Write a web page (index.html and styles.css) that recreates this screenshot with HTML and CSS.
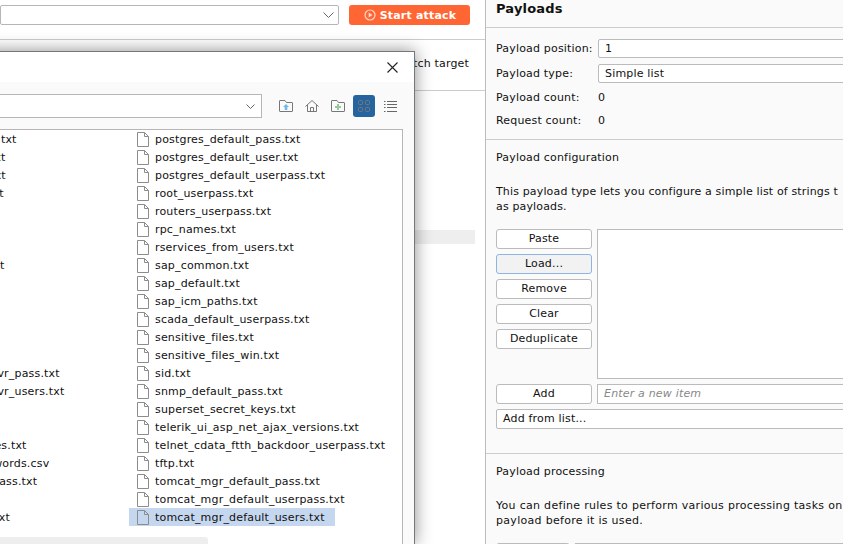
FILE: index.html
```html
<!DOCTYPE html>
<html>
<head>
<meta charset="utf-8">
<title>Intruder</title>
<link rel="stylesheet" href="styles.css">
</head>
<body>
<svg class="defs" width="0" height="0">
  <symbol id="file" viewBox="0 0 12 15">
    <path d="M.5.5h7l4 4v10H.5zM7.5.5v4h4" fill="none" stroke="#8c8c8c"/>
  </symbol>
</svg>

<div class="left">
  <div class="attackbar">
    <div class="combo attackcombo">
      <svg class="chev" width="11" height="6" viewBox="0 0 11 6"><path d="M.5.5l5 5 5-5" fill="none" stroke="#666"/></svg>
    </div>
    <div class="startbtn">
      <svg width="12" height="12" viewBox="0 0 12 12"><circle cx="6" cy="6" r="5" fill="none" stroke="#ffd9cc" stroke-width="1.2"/><path d="M4.7 3.6v4.8L8.4 6z" fill="#ffd9cc"/></svg>
      Start attack
    </div>
  </div>
  <div class="hostrow">Update Host header to match target</div>
  <div class="editor">
    <div class="editline"></div>
  </div>
</div>

<div class="right">
  <h2 class="paneltitle">Payloads</h2>
  <div class="section settings">
    <div class="setrow"><span class="setlabel">Payload position:</span><div class="field">1</div></div>
    <div class="setrow"><span class="setlabel">Payload type:</span><div class="field">Simple list</div></div>
    <div class="setrow plain counta"><span class="setlabel">Payload count:</span><span>0</span></div>
    <div class="setrow plain countb"><span class="setlabel">Request count:</span><span>0</span></div>
  </div>
  <div class="section config">
    <div class="sectitle">Payload configuration</div>
    <p class="desc configdesc">This payload type lets you configure a simple list of strings t<br>as payloads.</p>
    <div class="listarea">
      <div class="btncol">
        <div class="btn">Paste</div>
        <div class="btn focused">Load...</div>
        <div class="btn">Remove</div>
        <div class="btn">Clear</div>
        <div class="btn">Deduplicate</div>
      </div>
      <div class="listbox"></div>
    </div>
    <div class="addrow">
      <div class="btn">Add</div>
      <div class="newitem">Enter a new item</div>
    </div>
    <div class="addfrom">Add from list...</div>
  </div>
  <div class="section processing">
    <div class="sectitle">Payload processing</div>
    <p class="desc">You can define rules to perform various processing tasks on<br>payload before it is used.</p>
    <div class="rulerow">
      <div class="btn rulebtn"></div>
      <div class="ruletable"></div>
    </div>
  </div>
</div>

<div class="dialog">
  <div class="dlgtitle">
    <svg width="11" height="11" viewBox="0 0 11 11"><path d="M.5.5l10 10M10.5.5l-10 10" stroke="#222" stroke-width="1.1"/></svg>
  </div>
  <div class="dlgbody">
    <div class="dlgtools">
      <div class="combo dircombo">
        <svg class="chev" width="9" height="5" viewBox="0 0 9 5"><path d="M.5.5l4 4 4-4" fill="none" stroke="#666"/></svg>
      </div>
      <div class="toolicons">
        <svg width="14" height="12" viewBox="0 0 14 12"><path d="M1 11.500h12a.5.5 0 0 0 .5-.5V3a.5.5 0 0 0-.5-.5H7.500L6 .5H1a.5.5 0 0 0-.5.5v10a.5.5 0 0 0 .5.5z" fill="none" stroke="#777"/><path d="M7 4l3 3H8.300v3H5.700V7H4z" fill="#6db9ea"/></svg>
        <svg width="14" height="12" viewBox="0 0 14 12"><path d="M.5 6.500L7 .5l6.500 6M2.500 5v6.500h9V5M5.500 11.500v-4h3v4" fill="none" stroke="#777"/></svg>
        <svg width="14" height="12" viewBox="0 0 14 12"><path d="M1 11.500h12a.5.5 0 0 0 .5-.5V3a.5.5 0 0 0-.5-.5H7.500L6 .5H1a.5.5 0 0 0-.5.5v10a.5.5 0 0 0 .5.5z" fill="none" stroke="#777"/><path d="M6 4h2v2h2v2H8v2H6V8H4V6h2z" fill="#93cb9c"/></svg>
        <div class="gridbtn">
          <svg width="12" height="12" viewBox="0 0 12 12"><g fill="none" stroke="#777"><rect x=".5" y=".5" width="4" height="4" rx="1"/><rect x="7.500" y=".5" width="4" height="4" rx="1"/><rect x=".5" y="7.500" width="4" height="4" rx="1"/><rect x="7.500" y="7.500" width="4" height="4" rx="1"/></g></svg>
        </div>
        <svg class="listicon" width="13" height="11" viewBox="0 0 13 11"><path d="M3 .5h10M3 3.500h10M3 6.500h10M3 10.500h10M0 .5h1.500M0 3.500h1.500M0 6.500h1.500M0 10.500h1.500" stroke="#666"/></svg>
      </div>
    </div>
    <div class="filelist">
      <div class="filecol first">
        <div class="file"><svg width="12" height="15"><use href="#file"/></svg>hp_default_userpass.txt</div>
        <div class="file"><svg width="12" height="15"><use href="#file"/></svg>http_default_users.txt</div>
        <div class="file"><svg width="12" height="15"><use href="#file"/></svg>idrac_default_pass.txt</div>
        <div class="file"><svg width="12" height="15"><use href="#file"/></svg>idrac_default_user.txt</div>
        <div class="file"><svg width="12" height="15"><use href="#file"/></svg>ipmi_passwords.txt</div>
        <div class="file"><svg width="12" height="15"><use href="#file"/></svg>ipmi_users.txt</div>
        <div class="file"><svg width="12" height="15"><use href="#file"/></svg>joomla.txt</div>
        <div class="file"><svg width="12" height="15"><use href="#file"/></svg>keyboard-patterns.txt</div>
        <div class="file"><svg width="12" height="15"><use href="#file"/></svg>lync_subdomains.txt</div>
        <div class="file"><svg width="12" height="15"><use href="#file"/></svg>malicious_urls.txt</div>
        <div class="file"><svg width="12" height="15"><use href="#file"/></svg>mirai_pass.txt</div>
        <div class="file"><svg width="12" height="15"><use href="#file"/></svg>mirai_user.txt</div>
        <div class="file"><svg width="12" height="15"><use href="#file"/></svg>mirai_user_pass.txt</div>
        <div class="file"><svg width="12" height="15"><use href="#file"/></svg>multi_vendor_cctv_dvr_pass.txt</div>
        <div class="file"><svg width="12" height="15"><use href="#file"/></svg>multi_vendor_cctv_dvr_users.txt</div>
        <div class="file"><svg width="12" height="15"><use href="#file"/></svg>named_pipes.txt</div>
        <div class="file"><svg width="12" height="15"><use href="#file"/></svg>namelist.txt</div>
        <div class="file"><svg width="12" height="15"><use href="#file"/></svg>oracle_default_hashes.txt</div>
        <div class="file"><svg width="12" height="15"><use href="#file"/></svg>oracle_default_passwords.csv</div>
        <div class="file"><svg width="12" height="15"><use href="#file"/></svg>oracle_default_userpass.txt</div>
        <div class="file"><svg width="12" height="15"><use href="#file"/></svg>password.lst</div>
        <div class="file"><svg width="12" height="15"><use href="#file"/></svg>piata_ssh_userpass.txt</div>
      </div>
      <div class="filecol">
        <div class="file"><svg width="12" height="15"><use href="#file"/></svg>postgres_default_pass.txt</div>
        <div class="file"><svg width="12" height="15"><use href="#file"/></svg>postgres_default_user.txt</div>
        <div class="file"><svg width="12" height="15"><use href="#file"/></svg>postgres_default_userpass.txt</div>
        <div class="file"><svg width="12" height="15"><use href="#file"/></svg>root_userpass.txt</div>
        <div class="file"><svg width="12" height="15"><use href="#file"/></svg>routers_userpass.txt</div>
        <div class="file"><svg width="12" height="15"><use href="#file"/></svg>rpc_names.txt</div>
        <div class="file"><svg width="12" height="15"><use href="#file"/></svg>rservices_from_users.txt</div>
        <div class="file"><svg width="12" height="15"><use href="#file"/></svg>sap_common.txt</div>
        <div class="file"><svg width="12" height="15"><use href="#file"/></svg>sap_default.txt</div>
        <div class="file"><svg width="12" height="15"><use href="#file"/></svg>sap_icm_paths.txt</div>
        <div class="file"><svg width="12" height="15"><use href="#file"/></svg>scada_default_userpass.txt</div>
        <div class="file"><svg width="12" height="15"><use href="#file"/></svg>sensitive_files.txt</div>
        <div class="file"><svg width="12" height="15"><use href="#file"/></svg>sensitive_files_win.txt</div>
        <div class="file"><svg width="12" height="15"><use href="#file"/></svg>sid.txt</div>
        <div class="file"><svg width="12" height="15"><use href="#file"/></svg>snmp_default_pass.txt</div>
        <div class="file"><svg width="12" height="15"><use href="#file"/></svg>superset_secret_keys.txt</div>
        <div class="file"><svg width="12" height="15"><use href="#file"/></svg>telerik_ui_asp_net_ajax_versions.txt</div>
        <div class="file"><svg width="12" height="15"><use href="#file"/></svg>telnet_cdata_ftth_backdoor_userpass.txt</div>
        <div class="file"><svg width="12" height="15"><use href="#file"/></svg>tftp.txt</div>
        <div class="file"><svg width="12" height="15"><use href="#file"/></svg>tomcat_mgr_default_pass.txt</div>
        <div class="file"><svg width="12" height="15"><use href="#file"/></svg>tomcat_mgr_default_userpass.txt</div>
        <div class="file selected"><svg width="12" height="15"><use href="#file"/></svg>tomcat_mgr_default_users.txt</div>
      </div>
    </div>
    <div class="hscroll"></div>
  </div>
</div>
</body>
</html>
```

FILE: styles.css
```css
html, body {
  margin: 0;
  height: 544px;
  overflow: hidden;
}
body {
  position: relative;
  display: flex;
  background-color: #fff;
  font-family: "DejaVu Sans", sans-serif;
  font-size: 11px;
  letter-spacing: .18px;
  color: #111;
}
.defs {
  position: absolute;
}

/* left side, behind the file dialog */
.left {
  width: 485px;
  flex: none;
}
.attackbar {
  height: 40px;
  box-sizing: border-box;
  padding: 5px 15px 0 0;
  display: flex;
  gap: 10px;
  border-bottom: 1px solid #ccc;
}
.combo {
  box-sizing: border-box;
  height: 20px;
  background-color: #fff;
  border: 1px solid #b9b5b5;
  border-radius: 2px;
  display: flex;
  align-items: center;
  justify-content: flex-end;
  padding-right: 4px;
}
.attackcombo {
  width: 339px;
}
.startbtn {
  width: 121px;
  height: 20px;
  box-sizing: border-box;
  padding-left: 1px;
  background-color: #ff6633;
  border-radius: 3px;
  color: #fff;
  font-weight: bold;
  letter-spacing: .2px;
  display: flex;
  align-items: center;
  justify-content: center;
  gap: 4px;
}
.hostrow {
  height: 51px;
  box-sizing: border-box;
  padding: 17px 16px 0 0;
  text-align: right;
  border-bottom: 1px solid #ccc;
}
.editor {
  padding: 139px 10px 0 0;
}
.editline {
  height: 14px;
  background-color: #eee;
}

/* right side */
.right {
  flex: none;
  width: 600px;
  box-sizing: border-box;
  background-color: #fafafa;
  border-left: 1px solid #bbb;
}
.paneltitle {
  margin: 0;
  height: 28px;
  box-sizing: border-box;
  padding: 1px 10px 0;
  font-size: 13px;
  line-height: 16px;
  border-bottom: 1px solid #ccc;
}
.section {
  padding: 0 10px;
  border-bottom: 1px solid #ccc;
}
.settings {
  height: 112px;
  box-sizing: border-box;
  padding-top: 11px;
}
.setrow {
  display: flex;
  align-items: center;
  height: 19px;
  margin-bottom: 6px;
}
.setrow.plain {
  height: 14px;
}
.counta {
  margin-top: 7px;
  margin-bottom: 9px;
}
.setlabel {
  width: 102px;
  flex: none;
}
.field {
  flex: 1;
  box-sizing: border-box;
  height: 19px;
  line-height: 17px;
  padding-left: 6px;
  background-color: #fff;
  border: 1px solid #bbb;
  border-radius: 2px;
}
.config {
  height: 314px;
  box-sizing: border-box;
  padding-top: 11px;
}
.sectitle {
  line-height: 14px;
}
.desc {
  margin: 19px 0 0;
  line-height: 15px;
  letter-spacing: .3px;
}
.configdesc {
  letter-spacing: .15px;
}
.listarea {
  display: flex;
  gap: 5px;
  margin-top: 15px;
}
.btncol {
  display: flex;
  flex-direction: column;
  gap: 5px;
  height: 150px;
}
.btn {
  box-sizing: border-box;
  width: 96px;
  height: 20px;
  line-height: 18px;
  text-align: center;
  background-color: #fff;
  border: 1px solid #bbb;
  border-radius: 3px;
}
.btn.focused {
  background-color: #f2f2f2;
  border-color: #8db4e2;
}
.listbox {
  flex: 1;
  box-sizing: border-box;
  height: 150px;
  background-color: #fff;
  border: 1px solid #bbb;
}
.addrow {
  display: flex;
  gap: 5px;
  margin-top: 5px;
}
.newitem {
  flex: 1;
  box-sizing: border-box;
  height: 20px;
  line-height: 18px;
  padding-left: 6px;
  background-color: #fff;
  border: 1px solid #bbb;
  color: #888;
  font-style: italic;
}
.addfrom {
  box-sizing: border-box;
  height: 20px;
  line-height: 18px;
  margin-top: 5px;
  padding-left: 6px;
  background-color: #fff;
  border: 1px solid #bbb;
  border-radius: 2px;
}
.processing {
  padding-top: 11px;
  border-bottom: none;
}
.rulerow {
  display: flex;
  gap: 5px;
  margin-top: 15px;
}
.rulebtn {
  width: 74px;
}
.ruletable {
  flex: 1;
  height: 20px;
  border: 1px solid #bbb;
}

/* load file dialog, its left part is off the screen */
.dialog {
  position: absolute;
  left: -200px;
  top: 51px;
  width: 615px;
  height: 493px;
  box-sizing: border-box;
  border: 1px solid #777;
  border-bottom: none;
  background-color: #fff;
  box-shadow: 0 0 16px rgba(0, 0, 0, .45);
}
.dlgtitle {
  height: 30px;
  display: flex;
  justify-content: flex-end;
  align-items: flex-start;
  padding: 10px 16px 0 0;
  box-sizing: border-box;
}
.dlgbody {
  position: relative;
  height: 462px;
  background-color: #fafafa;
}
.dlgtools {
  height: 47px;
  box-sizing: border-box;
  padding-top: 12px;
  display: flex;
}
.dircombo {
  width: 461px;
  height: 24px;
  border-radius: 0;
  padding-right: 6px;
}
.toolicons {
  display: flex;
  align-items: center;
  gap: 12px;
  height: 24px;
  margin-left: 17px;
}
.gridbtn {
  width: 22px;
  height: 22px;
  margin-left: -4px;
  border-radius: 3px;
  background-color: #26649f;
  display: flex;
  align-items: center;
  justify-content: center;
}
.listicon {
  margin-left: -3px;
}
.filelist {
  box-sizing: border-box;
  width: 602px;
  height: 415px;
  background-color: #fff;
  border: 1px solid #b9b5b5;
  border-bottom: none;
  padding: 0 0 0 53px;
  display: flex;
  overflow: hidden;
}
.filecol {
  display: flex;
  flex-direction: column;
  align-items: flex-start;
}
.filecol.first {
  width: 274px;
}
.file {
  height: 18px;
  display: flex;
  align-items: center;
  gap: 6px;
  padding: 0 10px 0 8px;
  white-space: nowrap;
}
.file svg {
  flex: none;
}
.file.selected {
  background-color: #c5d7ef;
}
.hscroll {
  position: absolute;
  left: 20px;
  top: 455px;
  width: 387px;
  height: 7px;
  border-radius: 3px 3px 0 0;
  background-color: #eee;
}
```
